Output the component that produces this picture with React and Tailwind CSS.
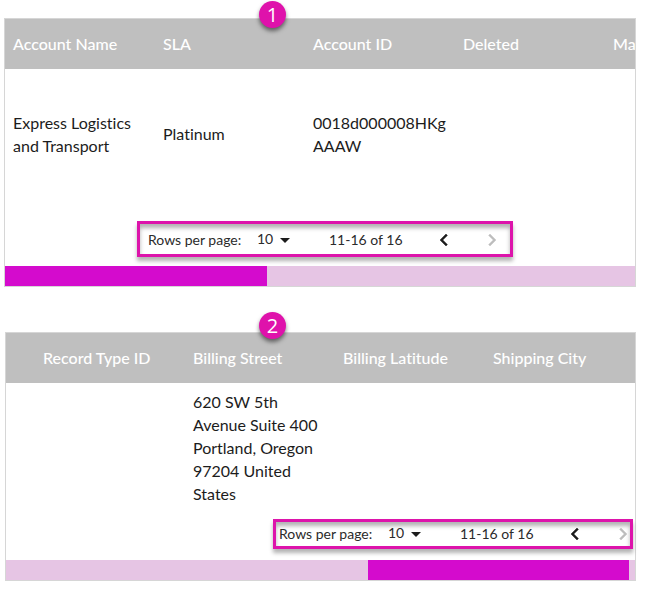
import { useState } from "react";

function Badge({ className, children }) {
  return (
    <span
      className={
        "absolute z-10 flex size-[27px] items-center justify-center rounded-full bg-[#df12ab] font-['Open_Sans','Liberation_Sans',sans-serif] text-[20px] leading-none text-white shadow-[0_3px_4px_rgba(0,0,0,0.5)] " +
        className
      }
    >
      {children}
    </span>
  );
}

function Pagination({ id, className }) {
  const [size, setSize] = useState("10");
  return (
    <nav
      aria-label="Table pages"
      className={
        "flex items-center border-[3px] border-[#dd14ab] text-[14px] leading-5 text-[#2b2b2b] shadow-[0_4px_4px_rgba(0,0,0,0.3),inset_0_4px_4px_rgba(0,0,0,0.3)] " +
        className
      }
    >
      <label htmlFor={id} className="w-[101px] shrink-0 whitespace-nowrap">
        Rows per page:
      </label>
      <div className="relative w-20 shrink-0">
        <select
          id={id}
          value={size}
          onChange={(e) => setSize(e.target.value)}
          className="block h-5 w-11 appearance-none bg-transparent pb-0.5 pl-2 leading-[18px] outline-none"
        >
          <option>10</option>
          <option>25</option>
        </select>
        <svg
          viewBox="0 0 10 5"
          className="pointer-events-none absolute left-[31px] top-2 h-[5px] w-2.5"
          fill="#1c1c1c"
          aria-hidden="true"
        >
          <path d="M0 0h10L5 5z" />
        </svg>
      </div>
      <span className="w-[103px] shrink-0 whitespace-nowrap">11-16 of 16</span>
      <button type="button" aria-label="Previous page" className="flex w-6 shrink-0 justify-center text-[#1c1c1c]">
        <svg viewBox="0 0 24 24" className="size-6" fill="currentColor" aria-hidden="true">
          <path d="M15.4 7.4 14 6l-6 6 6 6 1.4-1.4L10.8 12z" stroke="currentColor" strokeWidth="0.5" />
        </svg>
      </button>
      <button type="button" disabled aria-label="Next page" className="ml-6 flex w-6 shrink-0 justify-center text-[#bdbdbd]">
        <svg viewBox="0 0 24 24" className="size-6" fill="currentColor" aria-hidden="true">
          <path d="M10 6 8.6 7.4l4.6 4.6-4.6 4.6L10 18l6-6z" stroke="currentColor" strokeWidth="0.4" />
        </svg>
      </button>
    </nav>
  );
}

function DataTable({ columns, cells, tableClass, widths }) {
  return (
    <div className="overflow-hidden">
      <table className={"table-fixed text-left text-[16px] leading-[23px] " + tableClass}>
        <colgroup>
          {widths.map((w, i) => (
            <col key={i} className={w} />
          ))}
        </colgroup>
        <thead className="bg-[#bfbfbf] text-white">
          <tr className="h-[50px]">
            {columns.map((c, i) => (
              <th key={i} className="whitespace-nowrap px-2 pb-0.5 pt-0 font-medium">
                {c}
              </th>
            ))}
          </tr>
        </thead>
        <tbody className="text-[#1c1c1c]">
          <tr className="h-[131px]">
            {cells.map((c, i) => (
              <td key={i} className="px-2 pb-0.5 pt-0 align-middle [overflow-wrap:anywhere]">
                {c}
              </td>
            ))}
          </tr>
        </tbody>
      </table>
    </div>
  );
}

const COL = "w-[150px]";

export default function App() {
  return (
    <main className="bg-white pb-3 pl-1 pr-3 pt-[18px] font-[Lato,'Liberation_Sans',sans-serif] [font-variant-ligatures:none]">
      <section className="relative border border-[#d6d6d6]">
        <Badge className="-top-[18px] left-[254px]">1</Badge>
        <DataTable
          tableClass="w-[750px]"
          widths={[COL, COL, COL, COL, COL]}
          columns={["Account Name", "SLA", "Account ID", "Deleted", "Ma"]}
          cells={["Express Logistics and Transport", "Platinum", "0018d000008HKgAAAW", "", ""]}
        />
        <Pagination id="rows-1" className="mb-[9px] ml-[132px] mt-[21px] h-9 w-[376px] pl-2 pt-0.5" />
        <div className="h-5 bg-[#e6c5e4]">
          <div className="h-full w-[262px] bg-[#d40bcd]" />
        </div>
      </section>

      <section className="relative ml-px mt-[45px] border border-[#d6d6d6]">
        <Badge className="-top-[21px] left-[253px]">2</Badge>
        <DataTable
          tableClass="w-full"
          widths={["w-[29px]", COL, COL, COL, COL]}
          columns={["", "Record Type ID", "Billing Street", "Billing Latitude", "Shipping City"]}
          cells={["", "", "620 SW 5th Avenue Suite 400 Portland, Oregon 97204 United States", "", ""]}
        />
        <Pagination id="rows-2" className="mb-[11px] ml-auto mr-0.5 mt-[5px] h-[30px] w-[360px] pl-[3px]" />
        <div className="flex h-5 justify-end bg-[#e6c5e4] pr-1.5">
          <div className="h-full w-[261px] bg-[#d40bcd]" />
        </div>
      </section>
    </main>
  );
}
